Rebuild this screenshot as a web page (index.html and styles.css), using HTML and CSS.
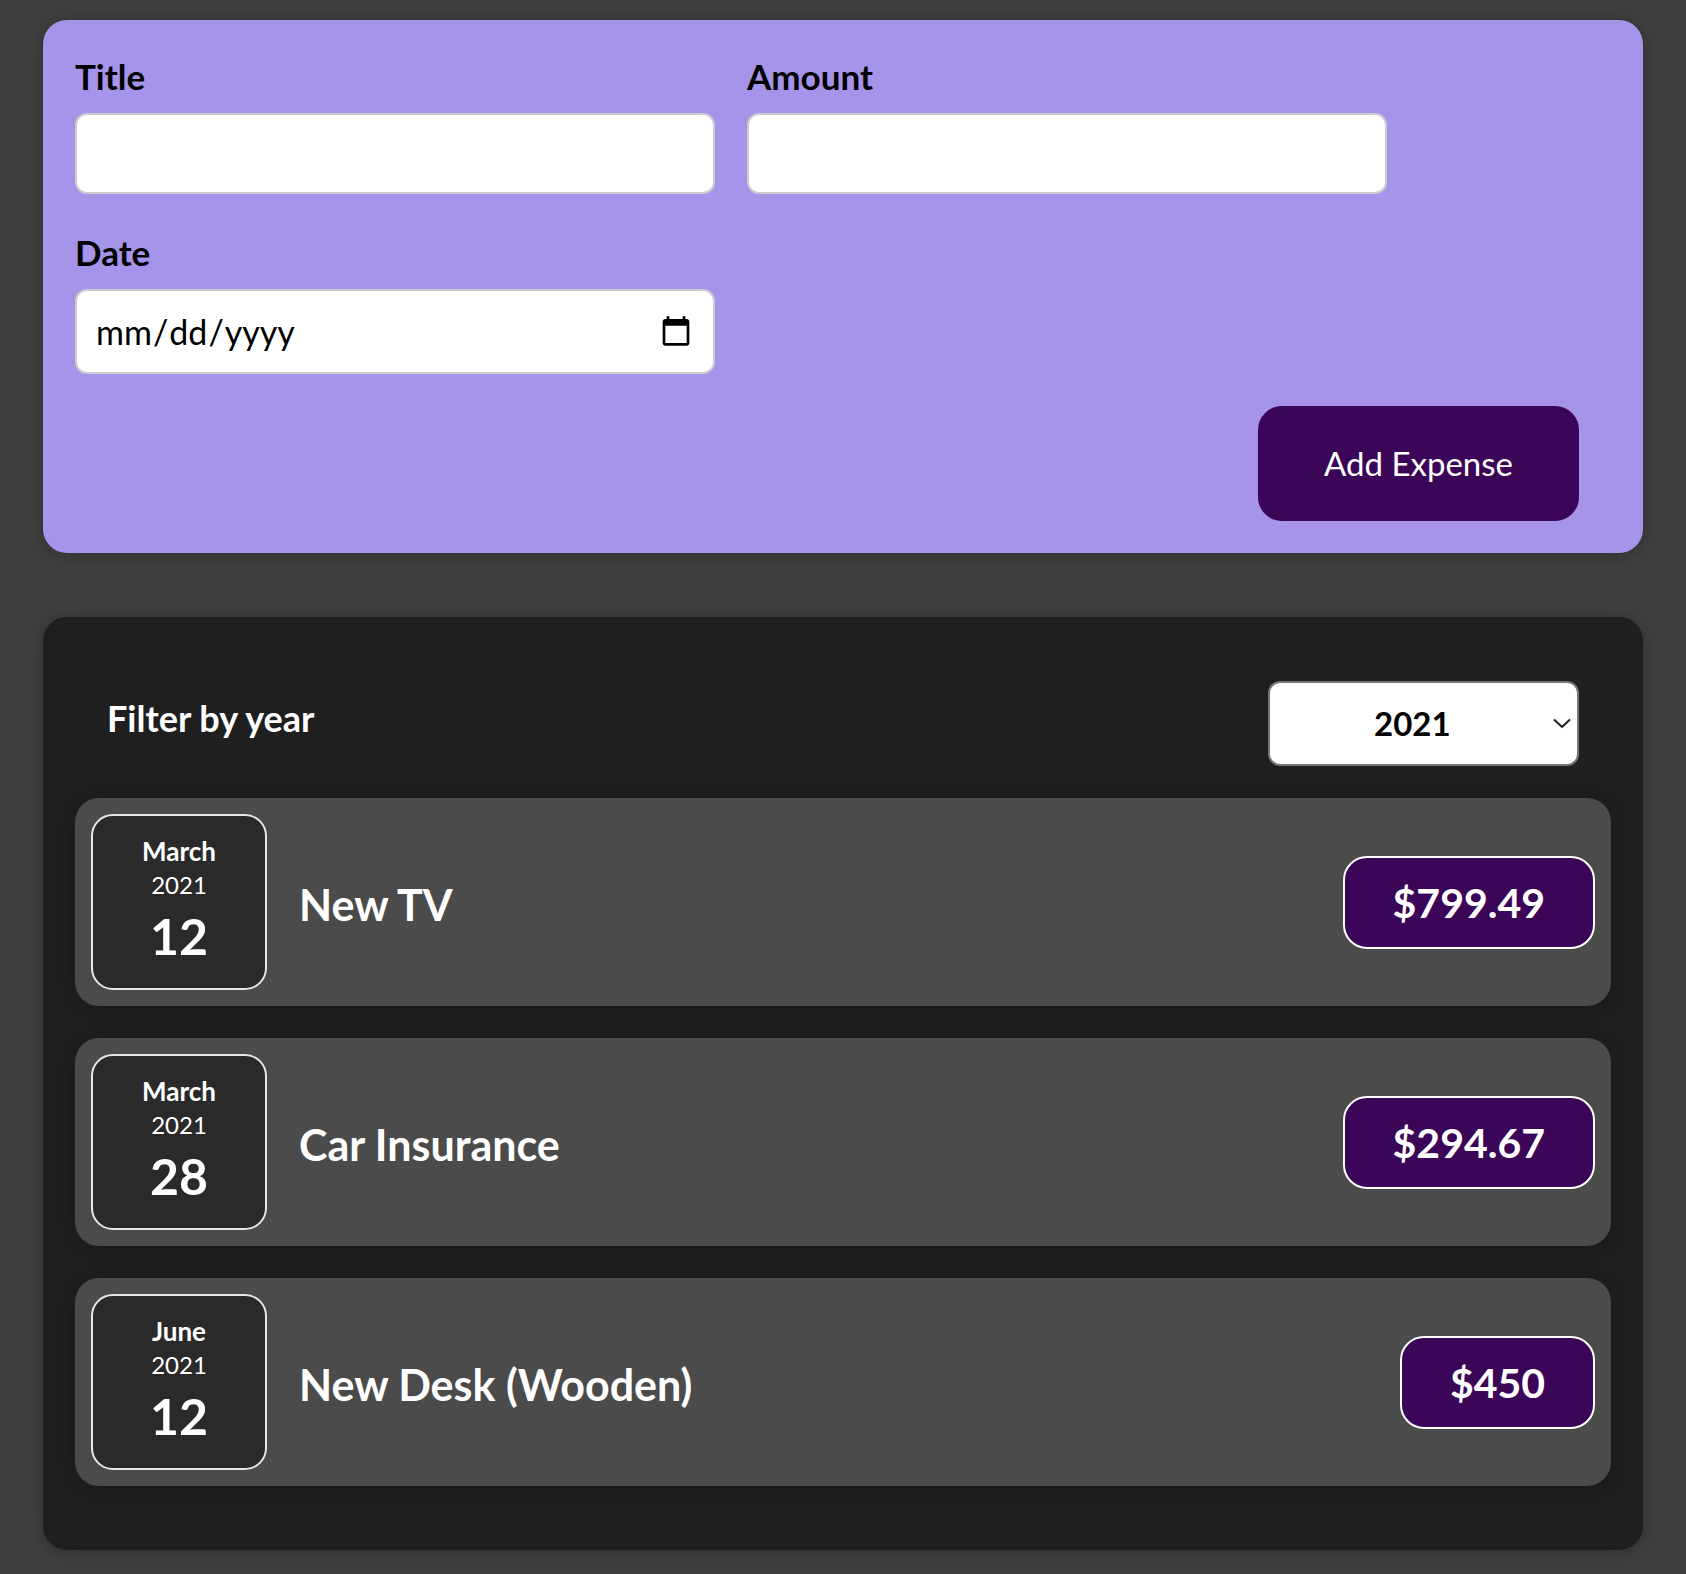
FILE: index.html
```html
<!DOCTYPE html>
<html lang="en">
<head>
<meta charset="utf-8">
<title>Expenses</title>
<link rel="stylesheet" href="styles.css">
</head>
<body>
<div class="app">
  <section class="new-expense">
    <form>
      <div class="controls">
        <div class="control">
          <label for="title">Title</label>
          <input id="title" type="text">
        </div>
        <div class="control">
          <label for="amount">Amount</label>
          <input id="amount" type="number" min="0.01" step="0.01">
        </div>
        <div class="control">
          <label for="date">Date</label>
          <input id="date" type="date" class="date-input">
        </div>
      </div>
      <div class="actions">
        <button type="button">Add Expense</button>
      </div>
    </form>
  </section>

  <section class="expenses">
    <div class="filter">
      <label for="year">Filter by year</label>
      <span class="select-wrap">
        <select id="year">
          <option>2022</option>
          <option selected>2021</option>
          <option>2020</option>
          <option>2019</option>
        </select>
        <svg class="chevron" width="18" height="11" viewBox="0 0 18 11" aria-hidden="true">
          <path d="M1 1.5 L9 9 L17 1.5" fill="none" stroke="#1a1a1a" stroke-width="2"/>
        </svg>
      </span>
    </div>
    <ul class="list">
      <li class="item">
        <div class="date">
          <div class="month">March</div>
          <div class="year">2021</div>
          <div class="day">12</div>
        </div>
        <div class="desc">
          <h2>New TV</h2>
          <div class="price">$799.49</div>
        </div>
      </li>
      <li class="item">
        <div class="date">
          <div class="month">March</div>
          <div class="year">2021</div>
          <div class="day">28</div>
        </div>
        <div class="desc">
          <h2>Car Insurance</h2>
          <div class="price">$294.67</div>
        </div>
      </li>
      <li class="item">
        <div class="date">
          <div class="month">June</div>
          <div class="year">2021</div>
          <div class="day">12</div>
        </div>
        <div class="desc">
          <h2>New Desk (Wooden)</h2>
          <div class="price">$450</div>
        </div>
      </li>
    </ul>
  </section>
</div>
</body>
</html>
```

FILE: styles.css
```css
* {
  box-sizing: border-box;
}

html {
  font-family: Lato, "Source Sans Pro", "Noto Sans", sans-serif;
}

body {
  margin: 0;
  background: #3f3f3f;
  font-size: 33px;
  line-height: 45px;
}

.app {
  display: flex;
  flex-direction: column;
  align-items: center;
  gap: 64px;
  padding: 20px 0 22px;
}

/* ---------- New expense form ---------- */
.new-expense {
  width: 1600px;
  background: #a594e9;
  padding: 32px;
  border-radius: 24px;
  box-shadow: 0 2px 16px rgba(0, 0, 0, 0.25);
}

.controls {
  display: flex;
  flex-wrap: wrap;
  column-gap: 32px;
  row-gap: 34px;
  margin-bottom: 32px;
}

.control {
  width: 640px;
}

.control label {
  display: block;
  font-size: 35px;
  font-weight: 700;
  color: #000;
  padding-top: 2px;
  margin-bottom: 14px;
}

.control input {
  display: block;
  width: 640px;
  height: 81px;
  font: inherit;
  font-size: 34px;
  padding: 16px 18px;
  border: 2px solid #ccc;
  border-radius: 12px;
  background: #fff;
  color: #000;
}

.control .date-input {
  height: 85px;
}

.actions {
  display: flex;
  justify-content: flex-end;
}

.actions button {
  font: inherit;
  height: 115px;
  padding: 0 64px;
  margin-right: 32px;
  border: 2px solid #3c0658;
  background: #3c0658;
  color: #fff;
  border-radius: 24px;
  cursor: pointer;
}

/* ---------- Expenses list ---------- */
.expenses {
  width: 1600px;
  background: #1f1f1f;
  padding: 32px;
  border-radius: 24px;
  box-shadow: 0 2px 16px rgba(0, 0, 0, 0.25);
}

.filter {
  display: flex;
  justify-content: space-between;
  align-items: center;
  padding: 0 32px;
  margin: 32px 0;
  color: #fff;
}

.filter label {
  font-size: 36px;
  font-weight: 700;
  margin-bottom: 10px;
}

.select-wrap {
  position: relative;
  display: block;
}

.filter select {
  display: block;
  font: inherit;
  font-weight: 700;
  width: 311px;
  height: 85px;
  padding: 0 60px 0 104px;
  border: 2px solid #767676;
  border-radius: 12px;
  background-color: #fff;
  color: #000;
  appearance: none;
  -webkit-appearance: none;
}

.chevron {
  position: absolute;
  right: 8px;
  top: 37px;
  pointer-events: none;
}

.list {
  list-style: none;
  margin: 0 0 32px;
  padding: 0;
  display: flex;
  flex-direction: column;
  gap: 32px;
}

.item {
  display: flex;
  align-items: center;
  padding: 16px;
  background: #4b4b4b;
  border-radius: 24px;
  box-shadow: 0 2px 16px rgba(0, 0, 0, 0.25);
}

.date {
  flex: none;
  width: 176px;
  height: 176px;
  display: flex;
  flex-direction: column;
  align-items: center;
  justify-content: center;
  border: 2px solid #e6e6e6;
  background: #2a2a2a;
  color: #fff;
  border-radius: 22px;
}

.month {
  font-size: 26px;
  line-height: 34px;
  font-weight: 700;
}

.year {
  font-size: 24px;
  line-height: 34px;
}

.day {
  font-size: 50px;
  line-height: 68px;
  font-weight: 700;
}

.desc {
  flex: 1;
  display: flex;
  align-items: center;
}

.desc h2 {
  flex: 1;
  margin: 4px 32px 0;
  font-size: 43px;
  line-height: 57px;
  color: #fff;
}

.price {
  font-size: 41px;
  line-height: 57px;
  font-weight: 700;
  color: #fff;
  background: #3c0658;
  border: 2px solid #fff;
  padding: 16px 48px;
  border-radius: 24px;
}
```
